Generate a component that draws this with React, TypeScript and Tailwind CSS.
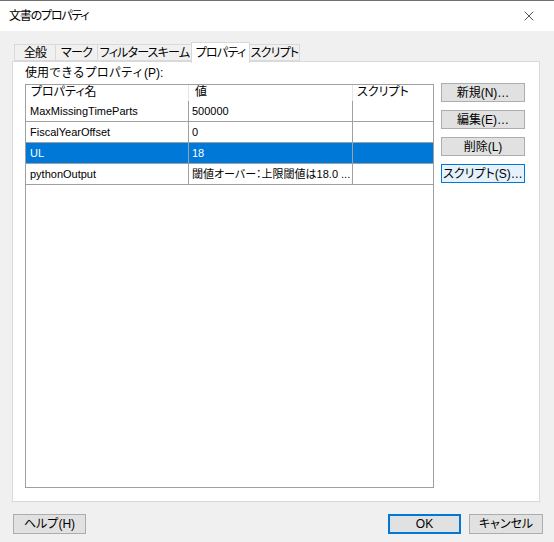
import { X } from 'lucide-react';

const font = "font-['Liberation_Sans','Noto_Sans_CJK_JP',sans-serif] [font-feature-settings:'palt']";
const jp = 'tracking-[-0.8px]';

const rows = [
  { name: 'MaxMissingTimeParts', value: '500000', script: '' },
  { name: 'FiscalYearOffset', value: '0', script: '' },
  { name: 'UL', value: '18', script: '', selected: true },
  { name: 'pythonOutput', value: '閾値オーバー：上限閾値は18.0 ...', script: '' },
];

const tabs = [
  { label: '全般', w: 'w-[42px]' },
  { label: 'マーク', w: 'w-[43px]' },
  { label: 'フィルタースキーム', w: 'w-[95px]' },
  { label: 'プロパティ', w: 'w-[59px]', active: true },
  { label: 'スクリプト', w: 'w-[51px]' },
];

function Btn({ label, className = '' }: { label: string; className?: string }) {
  return (
    <button
      className={`h-[19px] flex items-center justify-center text-[12px] leading-none text-black bg-[#e1e1e1] border border-[#adadad] ${className}`}
    >
      {label}
    </button>
  );
}

export default function App() {
  return (
    <div className={`w-[554px] h-[542px] bg-[#f0f0f0] flex flex-col border-t border-[#707070] text-[11px] ${font}`}>
      {/* title bar */}
      <div className="h-[30px] bg-white flex items-center justify-between pl-[9px] pr-[17px]">
        <span className="text-[12px] text-black tracking-[-1.2px]">文書のプロパティ</span>
        <X size={16} strokeWidth={1} className="text-black" />
      </div>

      <div className="flex flex-col px-[12px] pt-[11px]">
        {/* tabs */}
        <div className="flex items-end h-[19px] pl-[2px] relative z-10">
          {tabs.map(t => (
            <div
              key={t.label}
              className={`${t.w} flex items-center justify-center text-[12px] text-black border border-[#d9d9d9] -ml-px first:ml-0 whitespace-nowrap ${jp} ${
                t.active ? 'h-[21px] bg-white border-b-0 mb-[-2px]' : 'h-[17px] bg-[#f0f0f0]'
              }`}
            >
              {t.label}
            </div>
          ))}
        </div>

        {/* panel */}
        <div className="w-[528px] h-[441px] bg-white border border-[#d9d9d9] pl-[12px] pt-[1px] flex flex-col">
          <div className="text-[12px] text-black h-[21px] leading-[20px] [font-feature-settings:normal]">
            使用できるプロパティ(P):
          </div>
          <div className="flex gap-[7px]">
            {/* list */}
            <div className="w-[409px] h-[404px] border border-[#a0a0a0] bg-white flex flex-col">
              <div className="flex h-[16px] text-[12px] leading-[14px] text-black">
                <div className="w-[163px] pl-[5px] border-r border-[#e5e5e5]">プロパティ名</div>
                <div className="w-[164px] pl-[6px] border-r border-[#e5e5e5]">値</div>
                <div className="flex-1 pl-[4px]">スクリプト</div>
              </div>
              {rows.map(r => (
                <div
                  key={r.name}
                  className={`flex h-[21px] border-b border-[#a0a0a0] text-[11px] leading-[20px] ${
                    r.selected ? 'bg-[#0078d7] text-white' : 'text-black'
                  }`}
                >
                  <div className="w-[163px] pl-[4px] border-r border-[#a0a0a0] truncate">{r.name}</div>
                  <div className="w-[164px] pl-[3px] border-r border-[#a0a0a0] whitespace-nowrap overflow-hidden">
                    {r.value}
                  </div>
                  <div className="flex-1">{r.script}</div>
                </div>
              ))}
            </div>
            {/* side buttons */}
            <div className="flex flex-col gap-[8px] w-[84px] -mt-px">
              <Btn label="新規(N)…" />
              <Btn label="編集(E)…" />
              <Btn label="削除(L)" />
              <Btn label="スクリプト(S)…" className="!bg-[#e5f1fb] !border-[#0078d7]" />
            </div>
          </div>
        </div>

        {/* bottom buttons */}
        <div className="flex items-center mt-[12px] pl-px">
          <Btn label="ヘルプ(H)" className="w-[73px] h-[20px]" />
          <div className="flex-1" />
          <Btn label="OK" className="w-[73px] h-[20px] !border-2 !border-[#0078d7]" />
          <Btn label="キャンセル" className="w-[74px] h-[20px] ml-[8px] mr-[-1px]" />
        </div>
      </div>
    </div>
  );
}
